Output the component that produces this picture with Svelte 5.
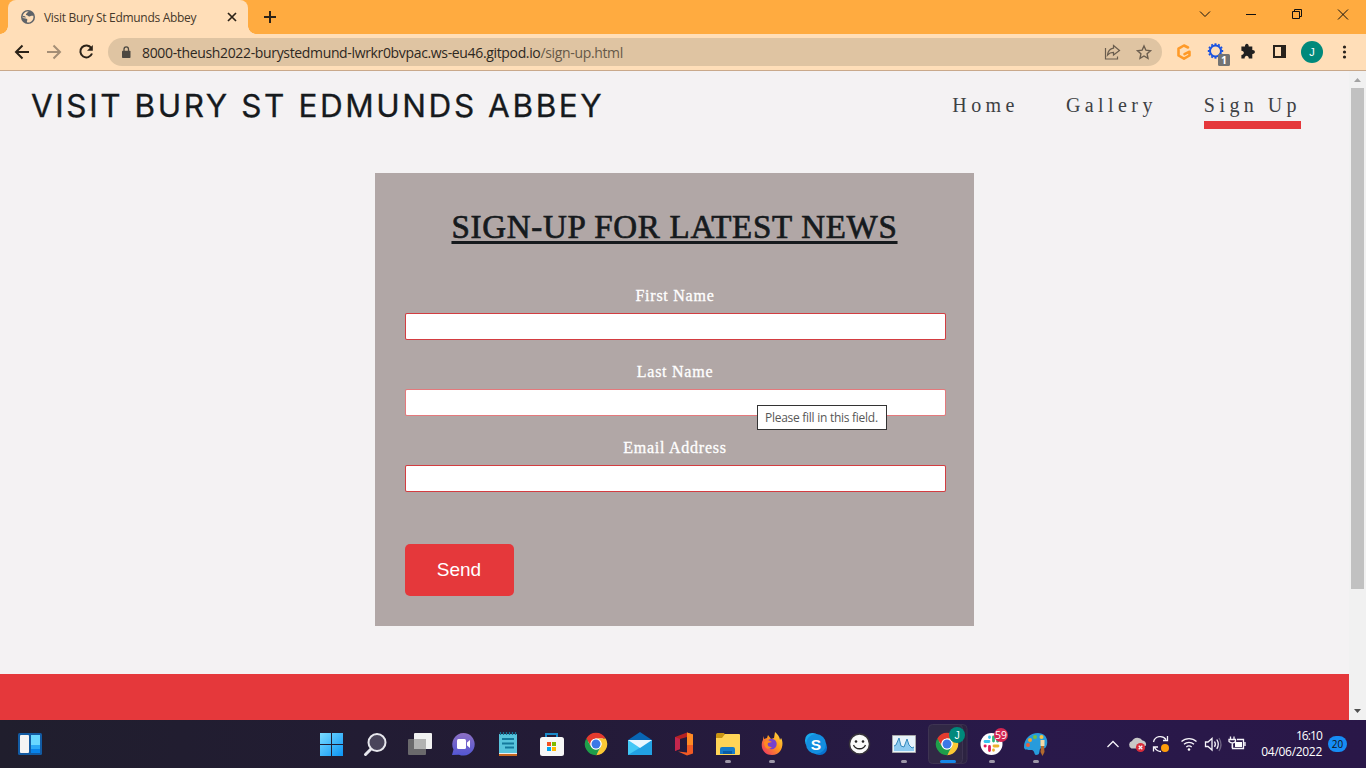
<script>
  const nav = ['Home', 'Gallery', 'Sign Up'];
  const fields = [
    { id: 'first', label: 'First Name' },
    { id: 'last', label: 'Last Name' },
    { id: 'email', label: 'Email Address' }
  ];
  const teeth = Array.from({ length: 12 }, (_, i) => i * 30);
</script>

{#snippet chrome(x, y)}
  <g transform="translate({x} {y})">
    <circle r="9" fill="#fff" />
    {#each [['#e33b2e', 0], ['#fcc934', 120], ['#1e9e4a', 240]] as [c, a]}
      <path transform="rotate({a})" fill={c} d="M-9.7-5.6A11.2 11.2 0 0 1 9.7-5.6H0A5.6 5.6 0 0 0-4.85 2.8Z" />
    {/each}
    <circle r="5.6" fill="#fff" />
    <circle r="4.5" fill="#3b78e7" />
  </g>
{/snippet}

<div class="window">
  <div class="tabs">
    <div class="tab">
      <svg class="globe" width="14" height="14" viewBox="0 0 14 14"><circle cx="7" cy="7" r="7" fill="#5f6368" /><path d="M7.800 1.400C6 1.600 6.800 2.900 5.500 3.500 4.600 4 4.700 5 5.900 5.300c1.300.3 1.100 1.200 2.500 1.100 1.500-.1 1.800-1.100 3.900-.6.7 3-1.100 5.800-3.900 6.600-1.700.4-2.300.2-2.500-.7-.2-1 .9-1.400.3-2.400-.7-1.200-2.300-1-4.500-1.400C1.200 4.400 4 1 7.800 1.400Z" fill="#ffdeb8" /><path d="M8.500 2c1 .1 2 .7 2.700 1.700L9.200 4.500 8 3.600ZM1.500 5.800 4 6.200l1 1.200-3.300-.2Z" fill="#5f6368" /></svg>
      <span class="tabtitle">Visit Bury St Edmunds Abbey</span>
      <svg width="10" height="10" viewBox="0 0 10 10"><path d="M1 1l8 8M9 1 1 9" stroke="#2b2218" stroke-width="1.700" /></svg>
    </div>
    <svg class="plus" width="12" height="12" viewBox="0 0 12 12"><path d="M6 0v12M0 6h12" stroke="#2b2218" stroke-width="2" /></svg>
    <svg class="controls" width="160" height="34" viewBox="0 0 160 34" fill="none" stroke="#111" stroke-width="1"><path d="M5 11.500l5 5 5-5M51 14.500h10M97.500 11.500h7v7h-7zM99.500 11.500v-2h7v7h-2M143 9.500l10 10M153 9.500l-10 10" /></svg>
  </div>

  <div class="toolbar">
    <svg width="108" height="36" viewBox="0 0 108 36" fill="none" stroke="#2b2218" stroke-width="2"><path d="M29 18H16.500M22.500 11.500 16 18l6.500 6.500" /><path d="M47 18h12.500M53.500 11.500 60 18l-6.500 6.500" stroke="#a48e76" /><path d="M91.300 14A6 6 0 1 0 92 19.500" /><path d="M92.800 11v5.800H87z" fill="#2b2218" stroke="none" /></svg>
    <div class="address">
      <svg width="10" height="13" viewBox="0 0 10 13"><rect x="1" y="4.800" width="8.500" height="7.200" rx=".8" fill="#4c4841" /><path d="M3 5V3.200a2.250 2.250 0 0 1 4.500 0V5" fill="none" stroke="#4c4841" stroke-width="1.300" /></svg>
      <span class="url">8000-theush2022-burystedmund-lwrkr0bvpac.ws-eu46.gitpod.io<em>/sign-up.html</em></span>
      <svg class="page-actions" width="52" height="20" viewBox="0 0 52 20" fill="none" stroke="#6a5d4e" stroke-width="1.200"><path d="M1.500 6v11h12v-2.500M9.500 3.500l6 5-6 4.500v-2.600c-3 0-4.500.8-6 2.600.5-4 2.500-6.300 6-6.800Z" /><path d="M40 4l1.900 4.200 4.600.5-3.400 3.100.9 4.500-4-2.300-4 2.300.9-4.500-3.400-3.100 4.600-.5Z" stroke-width="1.400" /></svg>
    </div>
    <svg class="extensions" width="204" height="36" viewBox="0 0 204 36">
      <path d="M26 13.500 22 11.500l-5.500 3.200v6.800l5.500 3.200 5.500-3.200v-3.800l-5 2.500" fill="none" stroke="#ff9a28" stroke-width="2.600" stroke-linejoin="round" stroke-linecap="round" />
      <g transform="translate(53.500 17)" stroke="#1851e0" fill="none"><circle r="5.500" stroke-width="2" />{#each teeth as a}<path transform="rotate({a})" d="M0-6v-1.700" stroke-width="2" />{/each}</g>
      <rect x="56" y="20" width="12" height="12" rx="1.500" fill="#737373" /><text x="62" y="30" text-anchor="middle" font-size="10.500" font-weight="700" fill="#fff">1</text>
      <path d="M79.500 13h3c-.3-3.500 4-3.500 3.700 0h3.600v3.600c3.500-.2 3.500 4.100 0 3.900V25h-3.500c0-3.400-4.200-3.400-4.200 0h-3.200v-3.400c3.300 0 3.300-4.200 0-4.200V13Z" transform="translate(.5 -.6)" fill="#202020" />
      <path d="M112 12h11v11h-11z" fill="none" stroke="#28221c" stroke-width="2" /><path d="M119 12h4.500v11H119z" fill="#28221c" />
      <circle cx="150" cy="18" r="11" fill="#00897b" /><text x="150" y="21.800" text-anchor="middle" class="sans" font-size="11" fill="#fff">J</text>
      <g fill="#28221c"><circle cx="182.500" cy="13" r="1.600" /><circle cx="182.500" cy="18" r="1.600" /><circle cx="182.500" cy="23" r="1.600" /></g>
    </svg>
  </div>

  <div class="viewport">
    <div class="site">
      <header>
        <h1>VISIT BURY ST EDMUNDS ABBEY</h1>
        <nav>{#each nav as item}<a href="#top" class:active={item === 'Sign Up'}>{item}</a>{/each}</nav>
      </header>
      <form>
        <h2>SIGN-UP FOR LATEST NEWS</h2>
        {#each fields as f}
          <label for={f.id}>{f.label}</label>
          <div class="control" class:hovered={f.id === 'last'}><input id={f.id} />{#if f.id === 'last'}<span class="tip">Please fill in this field.</span>{/if}</div>
        {/each}
        <button type="button">Send</button>
      </form>
      <footer></footer>
    </div>
    <div class="scroll">
      <svg width="17" height="17" viewBox="0 0 17 17"><path d="M5 11l3.500-4 3.500 4z" fill="#a3a3a3" /></svg>
      <div class="thumb"></div>
      <svg width="17" height="17" viewBox="0 0 17 17"><path d="M5 6l3.500 4L12 6z" fill="#505050" /></svg>
    </div>
  </div>

  <div class="taskbar">
    <svg class="widgets" width="24" height="22" viewBox="0 0 24 22"><rect width="24" height="22" rx="1.500" fill="#125ba3" /><rect x="2" y="2" width="9" height="18" rx="1" fill="#f4f4f4" /><path d="M13 2h9v10h-9z" fill="#68d7ff" /><path d="M13 12h9v4h-9z" fill="#2aa8f5" /><path d="M13 16h9v4h-9z" fill="#0883ea" /></svg>
    <div class="apps">
      <svg viewBox="0 0 44 48"><defs><linearGradient id="win" x2="1" y2="1"><stop stop-color="#7bdcff" /><stop offset="1" stop-color="#0a94f5" /></linearGradient></defs><path d="M11 13h11v11H11zM23 13h11v11H23zM11 25h11v11H11zM23 25h11v11H23z" fill="url(#win)" /></svg>
      <svg viewBox="0 0 44 48"><path d="M18 29l-5.500 5.500" stroke="#e7e7ed" stroke-width="3" stroke-linecap="round" /><circle cx="24" cy="22.500" r="8.500" fill="#49445a" stroke="#e7e7ed" stroke-width="2" /></svg>
      <svg viewBox="0 0 44 48"><rect x="17" y="13" width="18" height="16" rx="1" fill="#f1f1f1" /><rect x="11" y="19" width="18" height="16" rx="1" fill="#777" fill-opacity=".85" /><path d="M17 19h12v10H17z" fill="#b2b2b2" /></svg>
      <svg viewBox="0 0 44 48"><defs><linearGradient id="chat" x2="0" y2="1"><stop stop-color="#8d70c4" /><stop offset="1" stop-color="#5256d4" /></linearGradient></defs><path d="M22.500 13a11.300 11.300 0 1 1-4.500 21.700L11 35l1.500-5.500A11.300 11.300 0 0 1 22.500 13Z" fill="url(#chat)" /><rect x="16" y="19" width="9" height="10" rx="1.500" fill="#fff" /><path d="M26 22.500l3-2.500v8l-3-2.500z" fill="#fff" /></svg>
      <svg viewBox="0 0 44 48"><path d="M14 14h18v20H14z" fill="#58c4dc" /><path d="M14 33h18v3H14z" fill="#c76a22" /><path d="M14 33h18v1H14z" fill="#eee" /><path d="M15.500 12v3M18.500 12v3M21.500 12v3M24.500 12v3M27.500 12v3M30.500 12v3" stroke="#147294" stroke-width="1.300" /><path d="M17 19h12M17 23.500h12M20 27.500h9" stroke="#14799c" stroke-width="2" /></svg>
      <svg viewBox="0 0 44 48"><path d="M17 18v-4h11v4" fill="none" stroke="#1989c9" stroke-width="2" /><rect x="11" y="17" width="24" height="19" rx="2.500" fill="#f7f7f7" /><path d="M18 22h4v4h-4z" fill="#f25022" /><path d="M23 22h4v4h-4z" fill="#7fba00" /><path d="M18 27h4v4h-4z" fill="#00a4ef" /><path d="M23 27h4v4h-4z" fill="#ffb900" /></svg>
      <svg viewBox="0 0 44 48">{@render chrome(23, 24)}</svg>
      <svg viewBox="0 0 44 48"><path d="M11 20l12-8 12 8v8H11z" fill="#0865b4" /><path d="M11 20h24v15H11z" fill="#2eafe9" /><path d="M11 20l12 8-12 7z" fill="#43c8f6" /><path d="M35 20v15H11z" fill="#1590dd" fill-opacity=".45" /><path d="M11 20h24l-12 8z" fill="#e9f7ff" /></svg>
      <svg viewBox="0 0 44 48"><path d="M26 12.500l6 2v19l-6 2-9-4 9 1z" fill="#f15a24" /><path d="M14 17l12-4.500V17l-7 2v10l-5 2z" fill="#b52222" /><path d="M26 12.500l6 2V25h-6z" fill="#ff8a24" /><path d="M14 17l5 2v10l-5 2z" fill="#c3264d" /></svg>
      <svg viewBox="0 0 44 48"><path d="M11 14.500q0-1.500 1.500-1.500H19l2 3-3 3h-7z" fill="#c99412" /><path d="M20 14h14q1 0 1 1v19q0 1-1 1H11V18h6z" fill="#ffd457" /><path d="M15 34v-5q0-2 2-2h11q2 0 2 2v5z" fill="#167bc9" /><path d="M18 31h9v3h-9z" fill="#095ca6" /><rect class="dot" x="20" y="40" width="6" height="3" rx="1.500" /></svg>
      <svg viewBox="0 0 44 48"><defs><linearGradient id="fox" x1="1" x2="0" y2="1"><stop stop-color="#ffe548" /><stop offset=".45" stop-color="#ff981d" /><stop offset="1" stop-color="#ec286c" /></linearGradient></defs><path d="M14 16l1 3 3-1 1-3 3 4 3-1 1-6c4 3 5 7 5 8l1-2c3 4 2 17-9 17-10 0-12-10-9-15z" fill="url(#fox)" /><circle cx="22.500" cy="24" r="5.200" fill="#7742cd" /><path d="M15 22l4-2 4 2-4 1c-1 3 1 4 4 4-4 4-8 1-8-5z" fill="#ff8a22" /><rect class="dot" x="20" y="40" width="6" height="3" rx="1.500" /></svg>
      <svg viewBox="0 0 44 48"><rect x="12" y="13" width="15" height="15" rx="7" fill="#19a9ed" /><rect x="19" y="20" width="15" height="15" rx="7" fill="#0872d0" /><circle cx="23" cy="24" r="10" fill="#138ee0" /><text x="23" y="29.500" text-anchor="middle" class="sans" font-size="15.500" font-weight="700" fill="#fff">S</text></svg>
      <svg viewBox="0 0 44 48"><circle cx="22.500" cy="24" r="10" fill="#fafafa" stroke="#38343b" stroke-width="1.500" /><circle cx="19" cy="21.500" r="1.300" fill="#222" /><circle cx="26" cy="21.500" r="1.300" fill="#222" /><path d="M16.500 25c2 5 10 5 12 0" fill="none" stroke="#222" stroke-width="1.300" /></svg>
      <svg viewBox="0 0 44 48"><path d="M11.500 15.500h23v17h-23z" fill="#e8f3fb" stroke="#aaa" /><path d="M13 31v-5l2-1 3-7 2 8 3 1 3-8 2 6 3 3 2-1v4z" fill="#8dcaf0" /><path d="M13 26l2-1 3-7 2 8 3 1 3-8 2 6 3 3 2-1" fill="none" stroke="#3489bd" /><rect class="dot" x="20" y="40" width="6" height="3" rx="1.500" /></svg>
      <svg viewBox="0 0 44 48"><rect x="7" y="4.500" width="35" height="39" rx="4" fill="#2c2341" stroke="#3a304e" /><rect x="3.500" y="4.500" width="34" height="39" rx="4" fill="#312845" stroke="#3e3452" />{@render chrome(22, 24)}<circle cx="32" cy="15" r="8" fill="#00897b" /><text x="32" y="18.800" text-anchor="middle" class="sans" font-size="10.500" fill="#fff">J</text><rect x="15" y="40" width="16" height="3" rx="1.500" fill="#1687e8" /></svg>
      <svg viewBox="0 0 44 48"><circle cx="22.500" cy="24" r="11" fill="#fff" /><g fill="none" stroke-width="2.800" stroke-linecap="round"><path d="M16 21.500h4M20.500 17v.5" stroke="#36c5f0" /><path d="M24.500 17v4M28.500 21h.3" stroke="#2eb67d" /><path d="M25 26h4M24.500 30v.3" stroke="#ecb22e" /><path d="M20.500 26.500v4M16 26h.3" stroke="#e01e5a" /></g><circle cx="32" cy="15" r="7" fill="#d42652" /><text x="32" y="19" text-anchor="middle" font-size="10.500" fill="#fff">59</text><rect class="dot" x="20" y="40" width="6" height="3" rx="1.500" /></svg>
      <svg viewBox="0 0 44 48"><path d="M25 13c9 0 11 9 8 14-2 3-5 0-6 2-1 3 0 6-4 6-2 0-1-4-4-5-3-.5-8 1-8-3 0-8 6-14 14-14Z" fill="#279bdc" /><circle cx="22" cy="17" r="2" fill="#70bf45" /><circle cx="28.500" cy="17" r="2" fill="#f5c242" /><circle cx="17" cy="20" r="2" fill="#f4a12a" /><circle cx="15" cy="25" r="2" fill="#e85c3a" /><path d="M27.500 20h4v6h-4z" fill="#f4d9a4" /><path d="M28 26h3l.5 6-2 4-2-4z" fill="#b36a2e" /><rect class="dot" x="20" y="40" width="6" height="3" rx="1.500" /></svg>
    </div>
    <svg class="tray" width="150" height="48" viewBox="0 0 150 48" fill="none" stroke="#f6f4fa" stroke-width="1.300">
      <path d="M7.500 27l5.500-5.500 5.500 5.500" />
      <path d="M31.500 28.500a4 4 0 0 1 .5-7.500 6 6 0 0 1 10.500-.5c3 .5 4 3 3.500 5l-6 3z" fill="#c8c8c8" stroke="none" /><circle cx="40.500" cy="27.500" r="4.600" fill="#d92c3a" stroke="none" /><path d="M38.700 25.700l3.600 3.600M42.300 25.700l-3.600 3.600" />
      <path d="M53.500 22a7 7 0 0 1 12.500-2.500M67.500 16v4.500H63M61 31.500c-3 0-5-1.500-6.500-4M53.500 31.500v-4.500H58" /><circle cx="65" cy="28" r="4" fill="#ff9d0a" stroke="none" />
      <path d="M81.500 21.500a11 11 0 0 1 15 0M84 24.300a7.500 7.500 0 0 1 10 0M86.300 27a4.200 4.200 0 0 1 5.400 0" /><circle cx="89" cy="29.500" r="1.300" fill="#fff" stroke="none" />
      <path d="M105.500 22v4.500h2.500l4 3.500V18.500L108 22zM114.500 21.500q1.700 2.700 0 5.400M116.800 19.500q3 4.700 0 9.400" /><path d="M119 18q4 6.500 0 13" stroke="#6d6282" />
      <path d="M137 19.500h6.500v9h-11v-4M145 22v4" /><path d="M135 22h7v5h-7z" fill="#fff" stroke="none" /><path d="M130.500 16.500v3M134 16.500v3M129 19.500h6.500v2q-3 3-6.500 0zM132.300 23v5" />
    </svg>
    <div class="clock"><span class="time">16:10</span><span class="date">04/06/2022</span></div>
    <span class="count">20</span>
  </div>
</div>

<style>
  :global(body) { margin: 0; overflow: hidden; }
  .window { width: 1366px; height: 768px; display: flex; flex-direction: column; font-family: "Open Sans", sans-serif; }
  .window * { box-sizing: border-box; }
  svg { display: block; flex: none; }
  .sans { font-family: "Liberation Sans", sans-serif; }
  .tabs { height: 34px; background: #ffab40; display: flex; align-items: center; }
  .tab { width: 240px; height: 34px; margin-left: 8px; padding: 0 11px 0 13px; background: #ffdeb8; border-radius: 8px 8px 0 0; display: flex; align-items: center; position: relative; }
  .tab::before, .tab::after { content: ""; position: absolute; bottom: 0; width: 8px; height: 8px; }
  .tab::before { left: -8px; background: radial-gradient(circle at 0 0, #ffab40 7.5px, #ffdeb8 8px); }
  .tab::after { right: -8px; background: radial-gradient(circle at 100% 0, #ffab40 7.5px, #ffdeb8 8px); }
  .tabtitle { flex: 1; margin-left: 9px; font-size: 12px; letter-spacing: -.31px; color: #46382a; white-space: nowrap; }
  .plus { margin-left: 16px; }
  .controls { margin-left: auto; margin-right: 11px; }
  .toolbar { height: 37px; background: #ffdeb8; border-bottom: 1px solid #c9a98b; display: flex; align-items: center; }
  .address { width: 1054px; height: 28px; border-radius: 14px; background: #dfc4a2; display: flex; align-items: center; padding: 0 6px 0 13px; }
  .url { flex: 1; margin-left: 11px; font-size: 14px; letter-spacing: -.345px; color: #2e281f; white-space: nowrap; }
  .url em { font-style: normal; color: #665948; }
  .viewport { height: 649px; display: flex; }
  .site { width: 1349px; background: #f4f2f3; display: flex; flex-direction: column; }
  header { height: 102px; flex: none; display: flex; justify-content: space-between; padding: 0 48px 0 31px; }
  h1 { margin: 16px 0 0; font: 400 31.500px/38px Inter, sans-serif; letter-spacing: 2.580px; color: #161a1d; -webkit-text-stroke: .3px #161a1d; white-space: nowrap; }
  nav { display: flex; gap: 47px; padding-top: 20px; }
  nav a { height: 38px; font: 20px/28px "Liberation Serif", serif; letter-spacing: 4.430px; color: #3d4144; text-decoration: none; white-space: nowrap; }
  nav .active { border-bottom: 8px solid #e5383b; }
  form { width: 599px; height: 453px; flex: none; margin-left: 375px; background: #b1a7a6; padding: 34px 28px 30px 30px; display: flex; flex-direction: column; }
  h2 { margin: 0 2px 39px 0; text-align: center; font: 400 33px/40px "Liberation Serif", serif; letter-spacing: .7px; color: #161a1d; -webkit-text-stroke: .7px #161a1d; text-decoration: underline 3px; text-underline-offset: 3px; white-space: nowrap; }
  label { height: 27px; margin-right: 1px; text-align: center; font: 16px/20px "Liberation Serif", serif; letter-spacing: .75px; color: #fff; -webkit-text-stroke: .3px #fff; }
  .control { position: relative; width: 541px; height: 27px; margin-bottom: 22px; padding: 1px; border-radius: 2px; background: #d33d41; }
  .hovered { background: #e4797c; }
  input { appearance: none; display: block; width: 539px; height: 25px; padding: 0 2px; border: 0; border-radius: 1px; background: #fff; outline: none; }
  .tip { position: absolute; left: 352px; top: 16px; width: 130px; height: 25px; background: #fff; border: 1px solid #333; color: #575757; font-size: 12px; line-height: 24px; letter-spacing: -.27px; padding-left: 7px; white-space: nowrap; }
  button { margin-top: 30px; width: 109px; height: 52px; padding: 0 1px 0 0; border: 0; border-radius: 5px; background: #e5383b; color: #fff; font: 19px "Liberation Sans", sans-serif; }
  footer { height: 46px; margin-top: auto; background: #e5383b; }
  .scroll { width: 17px; background: #f1f1f1; }
  .thumb { width: 13px; height: 501px; margin: 0 0 114px 2px; background: #c1c1c1; }
  .taskbar { height: 48px; display: flex; align-items: center; background: linear-gradient(90deg, #201e2d, #231b36 40%, #29194a 75%, #291748); }
  .widgets { margin-left: 18px; }
  .apps { display: flex; margin-left: 267px; }
  .apps svg { width: 44px; height: 48px; }
  .dot { fill: #9d97a8; }
  .tray { margin-left: 43px; }
  .clock { width: 72px; display: flex; flex-direction: column; align-items: flex-end; color: #fff; font-size: 12px; line-height: 16px; letter-spacing: -.3px; }
  .time { letter-spacing: -.9px; }
  .count { margin-left: 6px; width: 19px; height: 16px; border-radius: 8px; background: #168cf5; color: #111; font-size: 10px; line-height: 16px; text-align: center; }
</style>
